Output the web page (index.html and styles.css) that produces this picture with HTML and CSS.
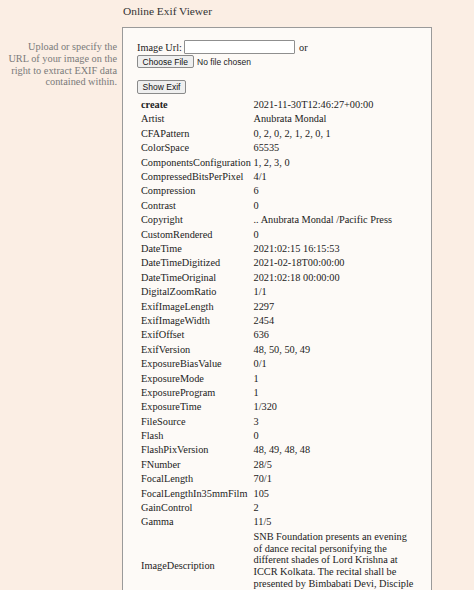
FILE: index.html
```html
<!DOCTYPE html>
<html>
<head>
<meta charset="utf-8">
<title>Online Exif Viewer</title>
<link rel="stylesheet" href="styles.css">
</head>
<body>
<div class="page">
  <div class="side-top"></div>
  <h1 class="title">Online Exif Viewer</h1>
  <div class="side">
    <p class="intro">Upload or specify the URL of your image on the right to extract EXIF data contained within.</p>
  </div>
  <div class="box">
    <div class="url-line">
      <span class="lbl">Image Url:</span>
      <input class="url" type="text">
      <span class="lbl or">or</span>
    </div>
    <div class="file-line">
      <button class="btn" type="button">Choose File</button>
      <span class="nofile">No file chosen</span>
    </div>
    <div class="show-line">
      <button class="btn" type="button">Show Exif</button>
    </div>
    <table class="exif">
      <tr><td class="k"><b>create</b></td><td class="v">2021-11-30T12:46:27+00:00</td></tr>
      <tr><td class="k">Artist</td><td class="v">Anubrata Mondal</td></tr>
      <tr><td class="k">CFAPattern</td><td class="v">0, 2, 0, 2, 1, 2, 0, 1</td></tr>
      <tr><td class="k">ColorSpace</td><td class="v">65535</td></tr>
      <tr><td class="k">ComponentsConfiguration</td><td class="v">1, 2, 3, 0</td></tr>
      <tr><td class="k">CompressedBitsPerPixel</td><td class="v">4/1</td></tr>
      <tr><td class="k">Compression</td><td class="v">6</td></tr>
      <tr><td class="k">Contrast</td><td class="v">0</td></tr>
      <tr><td class="k">Copyright</td><td class="v">.. Anubrata Mondal /Pacific Press</td></tr>
      <tr><td class="k">CustomRendered</td><td class="v">0</td></tr>
      <tr><td class="k">DateTime</td><td class="v">2021:02:15 16:15:53</td></tr>
      <tr><td class="k">DateTimeDigitized</td><td class="v">2021-02-18T00:00:00</td></tr>
      <tr><td class="k">DateTimeOriginal</td><td class="v">2021:02:18 00:00:00</td></tr>
      <tr><td class="k">DigitalZoomRatio</td><td class="v">1/1</td></tr>
      <tr><td class="k">ExifImageLength</td><td class="v">2297</td></tr>
      <tr><td class="k">ExifImageWidth</td><td class="v">2454</td></tr>
      <tr><td class="k">ExifOffset</td><td class="v">636</td></tr>
      <tr><td class="k">ExifVersion</td><td class="v">48, 50, 50, 49</td></tr>
      <tr><td class="k">ExposureBiasValue</td><td class="v">0/1</td></tr>
      <tr><td class="k">ExposureMode</td><td class="v">1</td></tr>
      <tr><td class="k">ExposureProgram</td><td class="v">1</td></tr>
      <tr><td class="k">ExposureTime</td><td class="v">1/320</td></tr>
      <tr><td class="k">FileSource</td><td class="v">3</td></tr>
      <tr><td class="k">Flash</td><td class="v">0</td></tr>
      <tr><td class="k">FlashPixVersion</td><td class="v">48, 49, 48, 48</td></tr>
      <tr><td class="k">FNumber</td><td class="v">28/5</td></tr>
      <tr><td class="k">FocalLength</td><td class="v">70/1</td></tr>
      <tr><td class="k">FocalLengthIn35mmFilm</td><td class="v">105</td></tr>
      <tr><td class="k">GainControl</td><td class="v">2</td></tr>
      <tr><td class="k">Gamma</td><td class="v">11/5</td></tr>
      <tr><td class="k">ImageDescription</td><td class="v">SNB Foundation presents an evening of dance recital personifying the different shades of Lord Krishna at ICCR Kolkata. The recital shall be presented by Bimbabati Devi, Disciple of Guru Kelucharan Mahapatra.</td></tr>
    </table>
  </div>
</div>
</body>
</html>
```
FILE: styles.css
```css
html, body {
  margin: 0;
  padding: 0;
  background: #fbeee4;
}

body {
  font-family: "Liberation Serif", "Times New Roman", serif;
  font-size: 10.3px;
  color: #222;
}

.page {
  display: grid;
  grid-template-columns: 117px 310px;
  column-gap: 5px;
  padding-top: 5px;
}

.title {
  margin: 0 0 9px 1px;
  font-size: 11.4px;
  font-weight: normal;
  line-height: 13px;
  color: #333;
}

.side {
  padding-top: 14px;
}

.intro {
  margin: 0 0 0 auto;
  width: 111px;
  text-align: right;
  color: #7a7a7a;
  line-height: 11.8px;
}

.box {
  background: #fdfaf7;
  border: 1px solid #9a9a9a;
  border-bottom: none;
  padding: 12px 14px 0 14px;
  min-height: 600px;
}

.url-line {
  display: flex;
  align-items: center;
  height: 15.3px;
}

.lbl {
  padding-top: 1px;
  line-height: 11.8px;
}

.url {
  box-sizing: border-box;
  width: 111px;
  height: 14.3px;
  margin: 0 0 0 2.6px;
  padding: 0 2px;
  border: 1px solid #8f8f8f;
  border-radius: 1px;
  background: #fff;
  font-size: 9px;
  align-self: flex-start;
}

.or {
  margin-left: 3.5px;
}

.file-line {
  display: flex;
  align-items: center;
  height: 13px;
}

.btn {
  box-sizing: border-box;
  height: 13.2px;
  margin: 0;
  padding: 0 4.6px;
  font-family: "Liberation Sans", Arial, sans-serif;
  font-size: 8.5px;
  line-height: 10px;
  color: #111;
  background: #efefef;
  border: 1px solid #8a8a8a;
  border-radius: 2px;
}

.nofile {
  margin-left: 3.5px;
  font-family: "Liberation Sans", Arial, sans-serif;
  font-size: 8.5px;
  color: #222;
}

.show-line {
  margin-top: 12.2px;
  height: 13.3px;
  display: flex;
}

.exif {
  margin: 4px 0 0 0;
  border-collapse: collapse;
  border-spacing: 0;
}

.exif td {
  padding: 1.3px 0;
  line-height: 11.8px;
  font-size: 10.3px;
  color: #222;
  vertical-align: middle;
}

.exif .k {
  box-sizing: border-box;
  width: 116.5px;
  padding-left: 4px;
  white-space: nowrap;
}

.exif .v {
  width: 162px;
}
```
